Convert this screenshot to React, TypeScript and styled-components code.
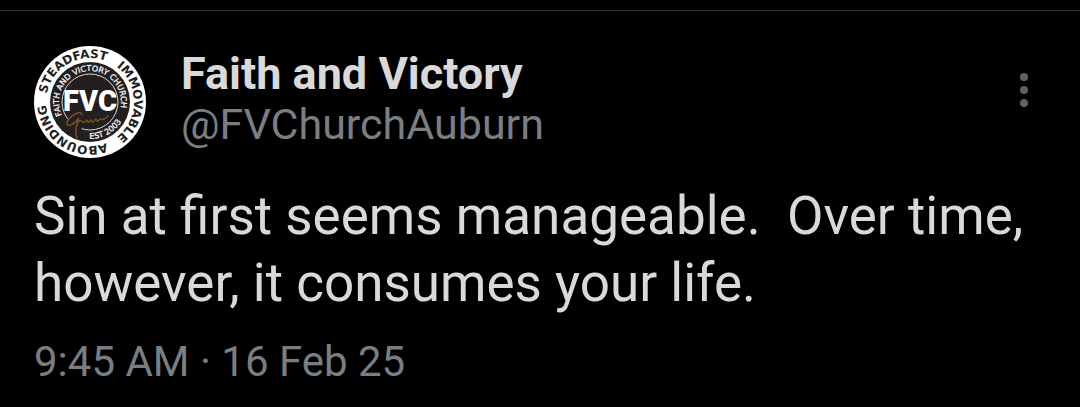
import React from "react";
import styled, { createGlobalStyle } from "styled-components";

const GlobalStyle = createGlobalStyle`
  *, *::before, *::after { box-sizing: border-box; }
  body {
    margin: 0;
    background: #000;
    font-family: Roboto, "Liberation Sans", sans-serif;
  }
`;

const Post = styled.article`
  margin-top: 10px;
  padding: 34px 34px 20px;
  border-top: 1px solid #333537;
  color: #d9d9d9;
`;

const Header = styled.header`
  display: flex;
  align-items: flex-start;
`;

const AvatarLink = styled.a`
  display: block;
  flex: none;
  margin-right: 35px;
  border-radius: 50%;
`;

const Badge = styled.svg`
  display: block;
  width: 112px;
  height: 114px;
`;

const Author = styled.div`
  display: flex;
  flex: 1;
  flex-direction: column;
  min-width: 0;
  padding-top: 4px;
`;

const AuthorLink = styled.a<{ $muted?: boolean }>`
  color: ${(p) => (p.$muted ? "#7a7e83" : "#d9d9d9")};
  font-size: ${(p) => (p.$muted ? 43 : 45)}px;
  font-weight: ${(p) => (p.$muted ? 400 : 700)};
  line-height: 50px;
  text-decoration: none;
`;

const MenuButton = styled.button`
  display: flex;
  flex: none;
  align-items: center;
  justify-content: center;
  width: 44px;
  height: 90px;
  padding: 0;
  border: 0;
  background: none;
  color: #606060;
`;

const Body = styled.p`
  margin: 24px 0 0;
  font-size: 53px;
  line-height: 67px;
  white-space: pre-wrap;
`;

const Timestamp = styled.time`
  display: block;
  margin-top: 20px;
  color: #7a7e83;
  font-size: 42px;
  line-height: 50px;
`;

function ChurchBadge() {
  return (
    <Badge viewBox="-56 -57 112 114" role="img" aria-label="Faith and Victory Church">
      <defs>
        <path id="ring-top" d="M0 44A44 44 0 0 1 0 -44A44 44 0 0 1 0 44" />
        <path id="ring-bottom" d="M0 -44A44 44 0 0 1 0 44A44 44 0 0 1 0 -44" />
        <path id="band" d="M0 31A31 31 0 0 1 0 -31A31 31 0 0 1 0 31" />
        <path id="band-under" d="M-37 0A37 37 0 0 0 37 0" />
      </defs>
      <circle r="56" fill="#fff" />
      <circle r="40" fill="#231f20" />
      <circle r="28" fill="none" stroke="#d8d8d8" strokeWidth="1" />
      <path d="M-30 17H-10L-8 28H-22Z" fill="#231f20" />
      <g fill="#231f20" fontFamily="DejaVu Sans" fontSize="12" fontWeight="700" textAnchor="middle">
        <text><textPath href="#ring-top" startOffset="42%">STEADFAST</textPath></text>
        <text><textPath href="#ring-bottom" startOffset="25%">IMMOVABLE</textPath></text>
        <text><textPath href="#ring-bottom" startOffset="59%">ABOUNDING</textPath></text>
      </g>
      <g fill="#f2f2f2" fontFamily="DejaVu Sans" textAnchor="middle" stroke="#f2f2f2" strokeWidth="0.3">
        <text fontSize="8"><textPath href="#band" startOffset="48%">FAITH AND VICTORY CHURCH</textPath></text>
        <text fontSize="8"><textPath href="#band-under" startOffset="66%">EST 2003</textPath></text>
      </g>
      <text x="0" y="9" fill="#fff" fontFamily="Roboto" fontWeight="900" fontSize="29" textAnchor="middle">FVC</text>
      <path
        d="M-8 13C-9 7 -20 14 -23 20C-25 27 -15 22 -11 16C-14 24 -16 31 -13 36M-12 20C-7 15 -9 24 -4 19C-2 16 -3 23 0 19C2 15 1 24 5 18C7 15 6 22 9 18C11 15 11 21 18 14"
        fill="none"
        stroke="#76501f"
        strokeWidth="1.5"
        strokeLinecap="round"
      />
    </Badge>
  );
}

export default function App() {
  return (
    <>
      <GlobalStyle />
      <Post>
        <Header>
          <AvatarLink href="#profile">
            <ChurchBadge />
          </AvatarLink>
          <Author>
            <AuthorLink href="#profile">Faith and Victory</AuthorLink>
            <AuthorLink href="#profile" $muted>@FVChurchAuburn</AuthorLink>
          </Author>
          <MenuButton type="button" aria-label="More options">
            <svg width="8" height="34" viewBox="0 0 8 34" fill="currentColor" aria-hidden="true">
              <circle cx="4" cy="4" r="4" />
              <circle cx="4" cy="17" r="4" />
              <circle cx="4" cy="30" r="4" />
            </svg>
          </MenuButton>
        </Header>
        <Body>{"Sin at first seems manageable.  Over time, however, it consumes your life."}</Body>
        <Timestamp dateTime="2025-02-16T09:45">9:45 AM · 16 Feb 25</Timestamp>
      </Post>
    </>
  );
}
